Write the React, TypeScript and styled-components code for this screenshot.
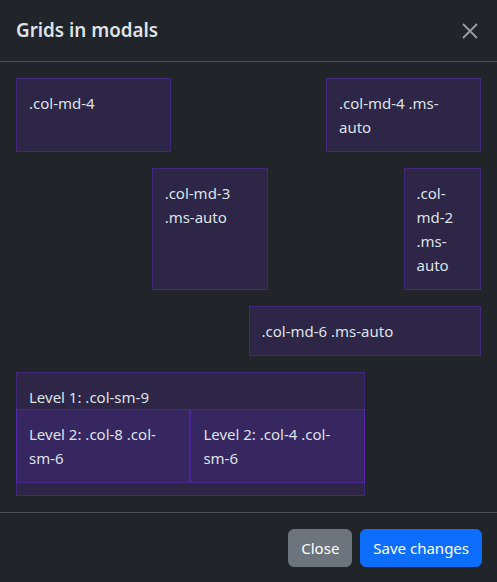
import React from "react";
import styled, { createGlobalStyle } from "styled-components";

const Global = createGlobalStyle`
  html, body { margin: 0; padding: 0; background: #212529; }
  body { font-family: "Noto Sans", "Open Sans", sans-serif; color: #dee2e6; }
  * { box-sizing: border-box; }
`;

const Modal = styled.div`
  width: 497px;
  height: 582px;
  background: #212529;
  border-radius: 8px;
  display: flex;
  flex-direction: column;
  overflow: hidden;
`;

const Header = styled.div`
  height: 62px;
  padding: 0 16px;
  display: flex;
  align-items: center;
  justify-content: space-between;
  border-bottom: 1px solid #4d5154;
`;

const Title = styled.h5`
  margin: 0;
  font-size: 18.8px;
  font-weight: 600;
  color: #dee2e6;
  line-height: 1.5;
`;

const CloseX = styled.button`
  width: 24px;
  height: 24px;
  padding: 0;
  margin-right: -1px;
  border: 0;
  background: transparent;
  display: flex;
  align-items: center;
  justify-content: center;
  cursor: pointer;
`;

const Body = styled.div`
  padding: 16px;
  display: flex;
  flex-direction: column;
  gap: 16px;
  flex: 1;
`;

const Row = styled.div`
  display: flex;
  width: 100%;
`;

const Col = styled.div<{ $span: number; $auto?: boolean }>`
  width: ${(p) => (p.$span / 12) * 100}%;
  flex: 0 0 auto;
  margin-left: ${(p) => (p.$auto ? "auto" : "0")};
  padding: 12px;
  background: rgba(112, 44, 249, 0.15);
  border: 1px solid rgba(112, 44, 249, 0.3);
  font-size: 15px;
  line-height: 24px;
  color: #dee2e6;
`;

const NestedCol = styled.div`
  width: 75%;
  flex: 0 0 auto;
  padding: 12px 0;
  background: rgba(112, 44, 249, 0.15);
  border: 1px solid rgba(112, 44, 249, 0.3);
  font-size: 15px;
  line-height: 24px;
  color: #dee2e6;
`;

const NestedLabel = styled.div`
  padding: 0 12px;
`;

const InnerRow = styled.div`
  display: flex;
  margin: 0 -1px;
`;

const InnerCol = styled.div`
  width: 50%;
  padding: 12px;
  background: rgba(112, 44, 249, 0.15);
  border: 1px solid rgba(112, 44, 249, 0.3);
`;

const Footer = styled.div`
  border-top: 1px solid #4d5154;
  padding: 16px 15px 15px;
  display: flex;
  justify-content: flex-end;
  gap: 8px;
`;

const Button = styled.button<{ $variant: "secondary" | "primary" }>`
  height: 38px;
  padding: 0 12px;
  border-radius: 6px;
  border: 1px solid ${(p) => (p.$variant === "primary" ? "#0d6efd" : "#6c757d")};
  background: ${(p) => (p.$variant === "primary" ? "#0d6efd" : "#6c757d")};
  color: #fff;
  font-family: inherit;
  font-size: 15px;
  line-height: 24px;
`;

export default function App() {
  return (
    <>
      <Global />
      <Modal>
        <Header>
          <Title>Grids in modals</Title>
          <CloseX aria-label="Close">
            <svg width="16" height="16" viewBox="0 0 16 16">
              <path d="M1 1L15 15M15 1L1 15" stroke="#97999b" strokeWidth="2" />
            </svg>
          </CloseX>
        </Header>
        <Body>
          <Row>
            <Col $span={4}>.col-md-4</Col>
            <Col $span={4} $auto>
              .col-md-4 .ms-auto
            </Col>
          </Row>
          <Row>
            <Col $span={3} $auto>
              .col-md-3 .ms-auto
            </Col>
            <Col $span={2} $auto>
              .col-md-2 .ms-auto
            </Col>
          </Row>
          <Row>
            <Col $span={6} $auto>
              .col-md-6 .ms-auto
            </Col>
          </Row>
          <Row>
            <NestedCol>
              <NestedLabel>Level 1: .col-sm-9</NestedLabel>
              <InnerRow>
                <InnerCol>Level 2: .col-8 .col-sm-6</InnerCol>
                <InnerCol>Level 2: .col-4 .col-sm-6</InnerCol>
              </InnerRow>
            </NestedCol>
          </Row>
        </Body>
        <Footer>
          <Button $variant="secondary">Close</Button>
          <Button $variant="primary">Save changes</Button>
        </Footer>
      </Modal>
    </>
  );
}
